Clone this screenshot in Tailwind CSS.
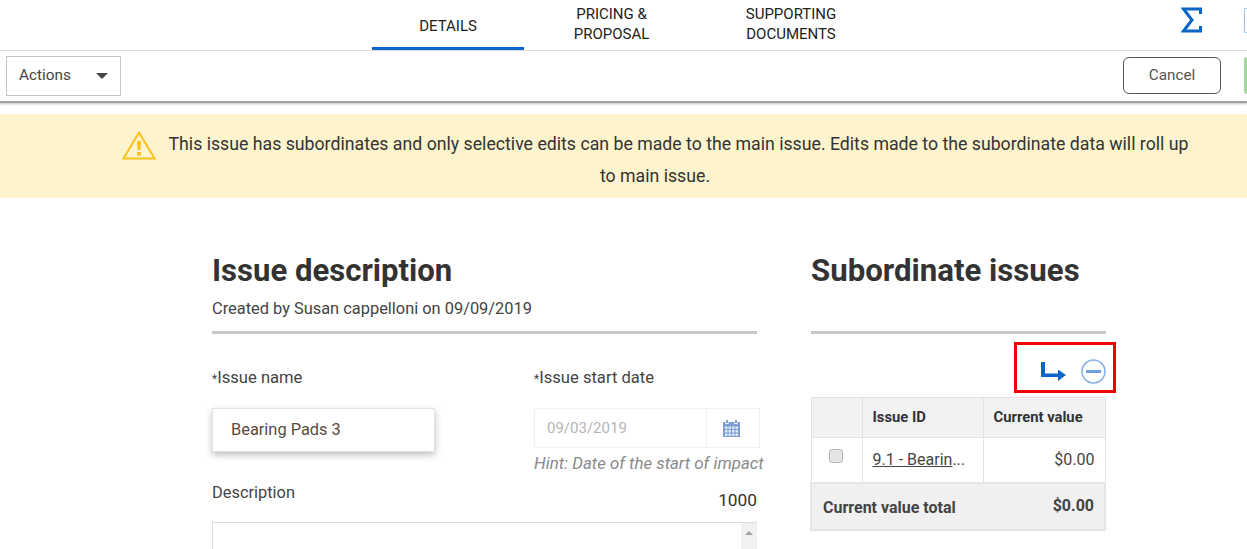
<!DOCTYPE html>
<html lang="en">
<head>
    <meta charset="UTF-8">
    <title>Issue details</title>
    <script src="https://cdn.jsdelivr.net/npm/@tailwindcss/browser@4"></script>
</head>
<body class="h-[549px] overflow-hidden bg-white font-['Roboto',sans-serif] text-[#333]">
    <!-- Tabs -->
    <header class="relative flex h-[51px] border-b border-[#dcdcdc] pl-[372px]">
        <a class="flex h-[50px] w-[152px] items-center justify-center border-b-[3px] border-[#0b66c9] pt-[6px] text-[15px] text-[#222]">DETAILS</a>
        <a class="flex h-[50px] w-[176px] items-center justify-center pr-[1px] pb-[2px] text-center text-[15px] leading-[20px] text-[#222]">PRICING &amp;<br>PROPOSAL</a>
        <a class="flex h-[50px] w-[182px] items-center justify-center pb-[2px] text-center text-[15px] leading-[20px] text-[#222]">SUPPORTING<br>DOCUMENTS</a>
        <svg class="absolute top-[7px] left-[1181px] h-[26px] w-[21px]" viewBox="0 0 21 26" fill="none" stroke="#0b66c9" stroke-width="3"><path d="M19.500 7V2H2.500L11 13 2.500 24H19.500V19"/></svg>
        <div class="absolute top-[8px] left-[1244px] h-[25px] w-[3px] rounded-l-[2px] border border-r-0 border-[#9cc3f0]"></div>
    </header>

    <!-- Toolbar -->
    <div class="flex h-[52px] items-start justify-between border-b-2 border-[#a0a0a0] pt-[5px] pl-[6px] shadow-[0_1px_2px_rgba(0,0,0,0.25)]">
        <div class="flex h-[40px] w-[115px] items-center justify-between border border-[#c4c4c4] pr-[12px] pb-[2px] pl-[12px] text-[15.300px] text-[#444]">
            <span>Actions</span>
            <span class="mt-[2px] h-0 w-0 border-x-[6px] border-t-[6px] border-x-transparent border-t-[#444]"></span>
        </div>
        <div class="flex items-start gap-[23px]">
            <button class="mt-[1px] h-[37px] w-[98px] rounded-[6px] border border-[#555] text-[15.300px] text-[#555]">Cancel</button>
            <div class="mt-[1px] h-[37px] w-[3px] rounded-l-[6px] bg-[#a5d6a0]"></div>
        </div>
    </div>

    <!-- Notice: the icon sits inline in the centred text -->
    <div class="mt-[11px] h-[84px] bg-[#fdf3cd] pt-[14px] pl-[115px]">
        <p class="w-[1080px] text-center text-[17.720px] leading-[32px] text-[#333]">
            <svg class="mr-[13px] inline-block h-[29px] w-[34px] align-middle" viewBox="0 0 34 29" fill="none"><path d="M17 1.500 32.500 27.500H1.500Z" stroke="#fcc21b" stroke-width="2"/><path d="M15 10h4l-.5 9h-3ZM15 21h4v3.500h-4Z" fill="#fcc21b"/></svg>This issue has subordinates and only selective edits can be made to the main issue. Edits made to the subordinate data will roll up to main issue.
        </p>
    </div>

    <main class="flex h-[352px] overflow-hidden pt-[53px] pl-[212px]">
        <!-- Issue description -->
        <section class="w-[545px] shrink-0">
            <h1 class="text-[31.100px] leading-[40px] font-bold text-[#333]">Issue description</h1>
            <p class="mt-[8px] text-[16.400px] leading-[20px] text-[#444]">Created by Susan cappelloni on 09/09/2019</p>
            <div class="mt-[12px] h-[3px] bg-[#c8c8c8]"></div>
            <div class="mt-[34px] flex">
                <div class="w-[322px] shrink-0">
                    <label class="block text-[16.600px] leading-[20px] text-[#444]"><span class="text-[12px]">*</span>Issue name</label>
                    <div class="mt-[19px] flex h-[44px] w-[223px] items-center border border-[#e2e2e2] pl-[18px] text-[16.400px] text-[#5a4a42] shadow-[0_3px_7px_rgba(0,0,0,0.25)]">Bearing Pads 3</div>
                </div>
                <div class="w-[235px] shrink-0">
                    <label class="block text-[16.600px] leading-[20px] text-[#444]"><span class="text-[12px]">*</span>Issue start date</label>
                    <div class="mt-[19px] flex h-[40px] w-[226px] border border-[#f0f0f0]">
                        <div class="flex w-[172px] items-center border-r border-[#f0f0f0] pl-[12px] text-[15px] text-[#b5b5b5]">09/03/2019</div>
                        <div class="flex flex-1 items-center justify-center pr-[4px]">
                            <svg class="h-[17px] w-[17px]" viewBox="0 0 17 17" fill="#7d9fd3"><path d="M3 0h2v3H3zM12 0h2v3h-2zM0 2h2.500v2h3V2h6v2h3V2H17v15H0z"/><path d="M2 6.500h2.500V9H2zM5.500 6.500H8V9H5.500zM9 6.500h2.500V9H9zM12.500 6.500H15V9h-2.500zM2 10h2.500v2.500H2zM5.500 10H8v2.500H5.500zM9 10h2.500v2.500H9zM12.500 10H15v2.500h-2.500zM2 13.500h2.500V16H2zM5.500 13.500H8V16H5.500zM9 13.500h2.500V16H9zM12.500 13.500H15V16h-2.500z" fill="#dfe8f6"/></svg>
                        </div>
                    </div>
                    <p class="mt-[5px] text-[16.850px] leading-[20px] whitespace-nowrap text-[#8a8a8a] italic">Hint: Date of the start of impact</p>
                </div>
            </div>
            <div class="mt-[10px] flex items-end justify-between">
                <label class="text-[16.400px] leading-[20px] text-[#444]">Description</label>
                <span class="relative top-[7px] text-[17.300px] leading-[20px] text-[#333]">1000</span>
            </div>
            <div class="mt-[19px] flex h-[27px] justify-end border-t border-l border-[#dcdcdc]">
                <div class="flex w-[16px] justify-center bg-[#f1f1f1] pt-[8px]">
                    <span class="h-0 w-0 border-x-[4px] border-b-[4px] border-x-transparent border-b-[#a3a3a3]"></span>
                </div>
            </div>
        </section>

        <!-- Subordinate issues -->
        <section class="ml-[54px] w-[295px] shrink-0">
            <h2 class="text-[31.200px] leading-[40px] font-bold text-[#333]">Subordinate issues</h2>
            <div class="mt-[40px] h-[3px] bg-[#c8c8c8]"></div>
            <div class="mt-[8px] ml-[203px] flex h-[51px] w-[102px] items-center gap-[15px] border-[3px] border-[#f00000] pt-[8px] pl-[24px]">
                <svg class="h-[19px] w-[25px] shrink-0" viewBox="0 0 25 19" fill="#0b66c9"><path d="M0 0h4v11.500h13V7.500L25 13 17 19v-4H0z"/></svg>
                <svg class="h-[25px] w-[25px] shrink-0" viewBox="0 0 25 25" fill="none"><circle cx="12.500" cy="12.500" r="11.500" stroke="#84aee8" stroke-width="1.500"/><path d="M5 12.500h15" stroke="#6f9fe3" stroke-width="3"/></svg>
            </div>
            <table class="mt-[4px] -ml-[1px] w-[296px] table-fixed border-collapse">
                <tbody>
                    <tr class="h-[40px] bg-[#f2f2f2] text-[14.800px] font-bold text-[#333]">
                        <td class="w-[51px] border border-[#e2e2e2]"></td>
                        <td class="w-[121px] border border-[#e2e2e2] pl-[10px]">Issue ID</td>
                        <td class="border border-[#e2e2e2] pl-[10px]">Current value</td>
                    </tr>
                    <tr class="h-[45px] text-[16px] text-[#444]">
                        <td class="border border-[#e2e2e2] pr-[2px] pb-[9px] text-center">
                            <span class="inline-block h-[14px] w-[14px] rounded-[3px] border border-[#b5b5b5] bg-[#e4e4e4] align-middle"></span>
                        </td>
                        <td class="border border-[#e2e2e2] pl-[10px] whitespace-nowrap"><span class="underline">9.1 - Bearin</span>...</td>
                        <td class="border border-[#e2e2e2] pr-[10px] text-right">$0.00</td>
                    </tr>
                    <tr class="h-[47px] bg-[#f0f0f0] text-[16px] font-bold text-[#444]">
                        <td colspan="2" class="border-2 border-r-0 border-[#e6e6e6] pt-[3px] pl-[11px]">Current value total</td>
                        <td class="border-2 border-l-0 border-[#e6e6e6] pr-[10px] pb-[1px] text-right">$0.00</td>
                    </tr>
                </tbody>
            </table>
        </section>
    </main>
</body>
</html>
